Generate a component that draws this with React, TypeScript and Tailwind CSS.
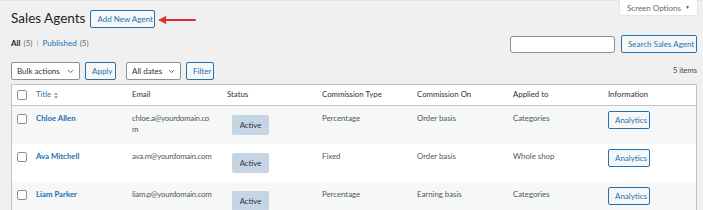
import { ChevronDown } from 'lucide-react'

// email lines as they wrap in the narrow column
const agents = [
  { name: 'Chloe Allen', email: ['chloe.a@yourdomain.co', 'm'], type: 'Percentage', on: 'Order basis', applied: 'Categories' },
  { name: 'Ava Mitchell', email: ['ava.m@yourdomain.com'], type: 'Fixed', on: 'Order basis', applied: 'Whole shop' },
  { name: 'Liam Parker', email: ['liam.p@yourdomain.com'], type: 'Percentage', on: 'Earning basis', applied: 'Categories' },
]

const cols = 'grid grid-cols-[19px_96px_95px_95px_95px_96px_95px_1fr]'

function Checkbox() {
  return <span className="block w-[10px] h-[10px] rounded-[2px] border border-[#8c8f94] bg-white" />
}

function Select({ label, width }: { label: string; width: string }) {
  return (
    <div className={`${width} h-[18px] flex items-center justify-between pl-[5px] pr-[4px] bg-white border border-[#8c8f94] rounded-[2px] text-[8px] text-[#2c3338]`}>
      <span>{label}</span>
      <ChevronDown className="w-[9px] h-[9px] text-[#50575e]" strokeWidth={2.5} />
    </div>
  )
}

function SecondaryButton({ children, className = '' }: { children: React.ReactNode; className?: string }) {
  return (
    <button className={`h-[18px] px-[6px] border border-[#2271b1] rounded-[2px] bg-[#f6f7f7] text-[8px] text-[#2271b1] leading-none whitespace-nowrap ${className}`}>
      {children}
    </button>
  )
}

export default function App() {
  return (
    <div className="w-[703px] h-[210px] overflow-hidden bg-[#f0f0f1] font-['Lato',sans-serif] text-[#3c434a] relative">
      <div className="h-[1px] bg-[#e2e2e3]" />

      {/* Screen options tab */}
      <div className="absolute right-[6px] top-0 w-[77px] h-[15px] bg-white rounded-b-[2px] flex items-center justify-center gap-[4px] text-[8px] text-[#646970] shadow-[0_0_0_1px_#e5e5e5]">
        Screen Options
        <span className="text-[5px] text-[#50575e]">▼</span>
      </div>

      <div className="pl-[11px] pr-[6px]">
        {/* Heading */}
        <div className="flex items-center h-[20px] mt-[8px]">
          <h1 className="text-[13.5px] text-[#1d2327] leading-none">Sales Agents</h1>
          <SecondaryButton className="ml-[5px] w-[65px] px-0">Add New Agent</SecondaryButton>
          <svg width="39" height="10" viewBox="0 0 39 10" className="ml-[3px] mt-[1px]">
            <line x1="4" y1="5" x2="37" y2="5" stroke="#d9302f" strokeWidth="2" strokeLinecap="round" />
            <path d="M1 5 L8 1.5 L7 5 L8 8.5 Z" fill="#d9302f" stroke="#d9302f" strokeWidth="1" strokeLinejoin="round" />
          </svg>
        </div>

        {/* Subsubsub + search */}
        <div className="flex items-center justify-between mt-[6px]">
          <div className="text-[8px] text-[#646970] flex items-center gap-[3px] -mt-[2px]">
            <span className="font-bold text-[#1d2327]">All</span>
            <span>(5)</span>
            <span className="text-[#a7aaad] mx-[1px]">|</span>
            <span className="text-[#2271b1]">Published</span>
            <span>(5)</span>
          </div>
          <div className="flex items-center gap-[6px]">
            <div className="w-[105px] h-[17px] bg-white border border-[#8c8f94] rounded-[3px]" />
            <SecondaryButton className="h-[17px] w-[76px] px-0">Search Sales Agent</SecondaryButton>
          </div>
        </div>

        {/* Tablenav */}
        <div className="flex items-center mt-[9px] h-[18px]">
          <Select label="Bulk actions" width="w-[69px]" />
          <SecondaryButton className="ml-[5px] w-[31px] px-0">Apply</SecondaryButton>
          <Select label="All dates" width="w-[55px] ml-[10px]" />
          <SecondaryButton className="ml-[5px] w-[28px] px-0">Filter</SecondaryButton>
          <span className="ml-auto text-[7.5px] text-[#3c434a]">5 items</span>
        </div>

        {/* Table */}
        <div className="mt-[4px] border border-[#c3c4c7] bg-white text-[7.8px]">
          <div className={`${cols} h-[21px] items-center border-b border-[#c3c4c7] text-[#2c3338]`}>
            <div className="pl-[5px]"><Checkbox /></div>
            <div className="pl-[5px] flex items-center gap-[3px] text-[#2271b1]">
              Title
              <svg width="4" height="7" viewBox="0 0 4 7" fill="#a7aaad">
                <path d="M0 3 L2 0 L4 3 Z" />
                <path d="M0 4 L2 7 L4 4 Z" />
              </svg>
            </div>
            <div className="pl-[5px]">Email</div>
            <div className="pl-[5px]">Status</div>
            <div className="pl-[5px]">Commission Type</div>
            <div className="pl-[5px]">Commission On</div>
            <div className="pl-[5px]">Applied to</div>
            <div className="pl-[5px]">Information</div>
          </div>
          {agents.map((a, i) => (
            <div key={a.name} className={`${cols} ${i % 2 === 0 ? 'bg-[#f6f7f7]' : 'bg-white'} leading-[11px] text-[#50575e]`}>
              <div className="pl-[5px] pt-[8px]"><Checkbox /></div>
              <div className="px-[5px] pt-[7px] font-bold text-[#2271b1]">{a.name}</div>
              <div className="px-[5px] pt-[7px] tracking-[-0.2px] flex flex-col">
                {a.email.map((line) => <span key={line}>{line}</span>)}
              </div>
              <div className="pl-[10px] pt-[9px] pb-[9px]">
                <span className="flex items-center justify-center w-[37px] h-[20px] rounded-[2px] bg-[#c5d5e3] text-[#2c3338]">Active</span>
              </div>
              <div className="px-[5px] pt-[7px]">{a.type}</div>
              <div className="px-[5px] pt-[7px]">{a.on}</div>
              <div className="px-[5px] pt-[7px]">{a.applied}</div>
              <div className="pl-[5px] pt-[5px]">
                <SecondaryButton className="h-[17px] w-[42px] px-0">Analytics</SecondaryButton>
              </div>
            </div>
          ))}
        </div>
      </div>
    </div>
  )
}
